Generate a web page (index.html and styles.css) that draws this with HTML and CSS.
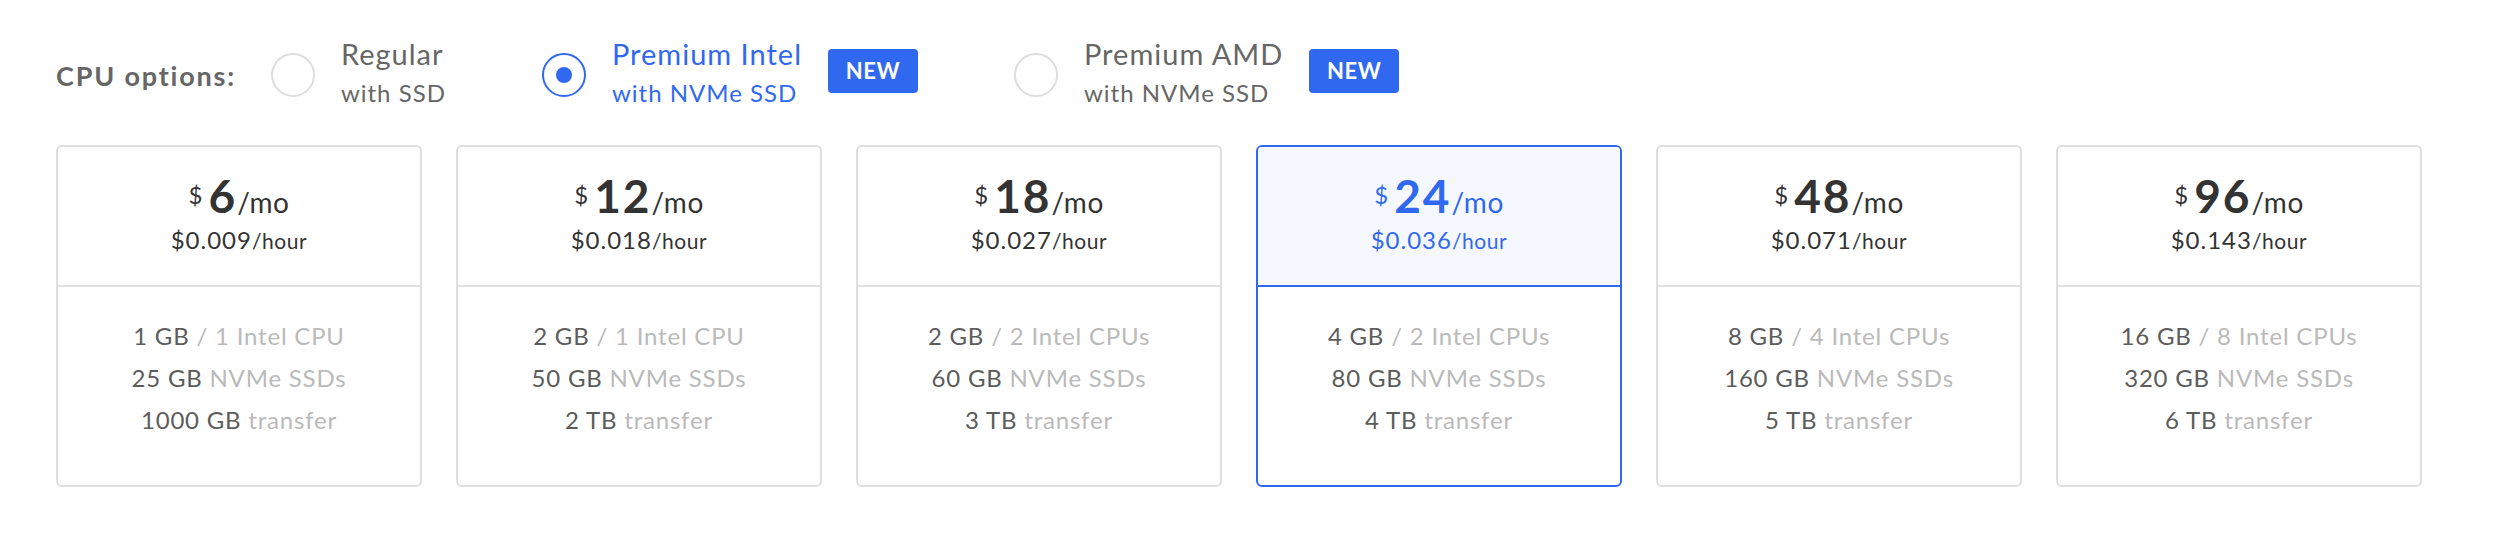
FILE: index.html
```html
<!DOCTYPE html>
<html lang="en">
<head>
<meta charset="utf-8">
<title>Droplet plans</title>
<link rel="stylesheet" href="styles.css">
</head>
<body>
<div class="page">
  <div class="cpu-row">
    <div class="cpu-label">CPU options:</div>
    <div class="option">
      <span class="radio"></span>
      <div class="opt-text">
        <div class="opt-title">Regular</div>
        <div class="opt-sub">with SSD</div>
      </div>
    </div>
    <div class="option selected">
      <span class="radio"><span class="dot"></span></span>
      <div class="opt-text">
        <div class="opt-title">Premium Intel</div>
        <div class="opt-sub">with NVMe SSD</div>
      </div>
      <span class="badge">NEW</span>
    </div>
    <div class="option">
      <span class="radio"></span>
      <div class="opt-text">
        <div class="opt-title">Premium AMD</div>
        <div class="opt-sub">with NVMe SSD</div>
      </div>
      <span class="badge">NEW</span>
    </div>
  </div>

  <div class="cards">
    <div class="card">
      <div class="card-head">
        <div class="price"><span class="cur">$</span>6<span class="per">/mo</span></div>
        <div class="hour">$0.009<span class="hour-unit">/hour</span></div>
      </div>
      <div class="card-body">
        <div class="spec">1 GB <span class="muted">/ 1 Intel CPU</span></div>
        <div class="spec">25 GB <span class="muted">NVMe SSDs</span></div>
        <div class="spec">1000 GB <span class="muted">transfer</span></div>
      </div>
    </div>
    <div class="card">
      <div class="card-head">
        <div class="price"><span class="cur">$</span>12<span class="per">/mo</span></div>
        <div class="hour">$0.018<span class="hour-unit">/hour</span></div>
      </div>
      <div class="card-body">
        <div class="spec">2 GB <span class="muted">/ 1 Intel CPU</span></div>
        <div class="spec">50 GB <span class="muted">NVMe SSDs</span></div>
        <div class="spec">2 TB <span class="muted">transfer</span></div>
      </div>
    </div>
    <div class="card">
      <div class="card-head">
        <div class="price"><span class="cur">$</span>18<span class="per">/mo</span></div>
        <div class="hour">$0.027<span class="hour-unit">/hour</span></div>
      </div>
      <div class="card-body">
        <div class="spec">2 GB <span class="muted">/ 2 Intel CPUs</span></div>
        <div class="spec">60 GB <span class="muted">NVMe SSDs</span></div>
        <div class="spec">3 TB <span class="muted">transfer</span></div>
      </div>
    </div>
    <div class="card selected">
      <div class="card-head">
        <div class="price"><span class="cur">$</span>24<span class="per">/mo</span></div>
        <div class="hour">$0.036<span class="hour-unit">/hour</span></div>
      </div>
      <div class="card-body">
        <div class="spec">4 GB <span class="muted">/ 2 Intel CPUs</span></div>
        <div class="spec">80 GB <span class="muted">NVMe SSDs</span></div>
        <div class="spec">4 TB <span class="muted">transfer</span></div>
      </div>
    </div>
    <div class="card">
      <div class="card-head">
        <div class="price"><span class="cur">$</span>48<span class="per">/mo</span></div>
        <div class="hour">$0.071<span class="hour-unit">/hour</span></div>
      </div>
      <div class="card-body">
        <div class="spec">8 GB <span class="muted">/ 4 Intel CPUs</span></div>
        <div class="spec">160 GB <span class="muted">NVMe SSDs</span></div>
        <div class="spec">5 TB <span class="muted">transfer</span></div>
      </div>
    </div>
    <div class="card">
      <div class="card-head">
        <div class="price"><span class="cur">$</span>96<span class="per">/mo</span></div>
        <div class="hour">$0.143<span class="hour-unit">/hour</span></div>
      </div>
      <div class="card-body">
        <div class="spec">16 GB <span class="muted">/ 8 Intel CPUs</span></div>
        <div class="spec">320 GB <span class="muted">NVMe SSDs</span></div>
        <div class="spec">6 TB <span class="muted">transfer</span></div>
      </div>
    </div>
  </div>
</div>
</body>
</html>
```

FILE: styles.css
```css
* { box-sizing: border-box; }

html, body {
  margin: 0;
  padding: 0;
  background: #ffffff;
}

body {
  font-family: "Lato", "Liberation Sans", sans-serif;
  color: #333333;
}

.page {
  padding: 36px 0 0 56px;
}

.cpu-row {
  display: flex;
  align-items: center;
}

.cpu-label {
  font-size: 27px;
  line-height: 30px;
  font-weight: 700;
  letter-spacing: 1.8px;
  color: #666666;
  margin-right: 35px;
  padding-top: 2px;
}

.option {
  display: flex;
  align-items: center;
  margin-right: 96px;
  color: #666666;
}

.option.selected {
  color: #3069f0;
}

.radio {
  width: 44px;
  height: 44px;
  border: 2px solid #dddddd;
  border-radius: 50%;
  display: flex;
  align-items: center;
  justify-content: center;
  margin-right: 26px;
  flex: none;
}

.option.selected .radio {
  border-color: #3069f0;
}

.dot {
  width: 16px;
  height: 16px;
  border-radius: 50%;
  background: #3069f0;
}

.opt-text {
  display: flex;
  flex-direction: column;
}

.opt-title {
  font-size: 29px;
  line-height: 36px;
  letter-spacing: 1px;
}

.opt-sub {
  font-size: 24px;
  line-height: 41px;
  letter-spacing: 1px;
}

.badge {
  margin-left: 26px;
  margin-bottom: 8px;
  width: 90px;
  height: 44px;
  border-radius: 4px;
  background: #3069f0;
  color: #ffffff;
  font-size: 22px;
  font-weight: 700;
  display: flex;
  align-items: center;
  justify-content: center;
  letter-spacing: 0.6px;
}

.cards {
  display: flex;
  gap: 34px;
  margin-top: 32px;
}

.card {
  width: 366px;
  height: 342px;
  border: 2px solid #dfdfdf;
  border-radius: 6px;
  display: flex;
  flex-direction: column;
  overflow: hidden;
  text-align: center;
}

.card-head {
  height: 140px;
  border-bottom: 2px solid #dfdfdf;
  padding-top: 24px;
  color: #333333;
}

.price {
  font-size: 46px;
  line-height: 50px;
  font-weight: 700;
  letter-spacing: 2px;
}

.cur {
  font-size: 24px;
  font-weight: 400;
  line-height: 1;
  vertical-align: 9px;
  margin-right: 6px;
  letter-spacing: 0;
}

.per {
  font-size: 28px;
  font-weight: 400;
  line-height: 1;
  letter-spacing: 0.5px;
}

.hour {
  font-size: 24px;
  line-height: 32px;
  margin-top: 3px;
  letter-spacing: 1px;
}

.hour-unit {
  font-size: 21px;
  line-height: 1;
  letter-spacing: 0.6px;
}

.card-body {
  padding-top: 28px;
}

.spec {
  font-size: 24px;
  line-height: 42px;
  letter-spacing: 0.8px;
  color: #5c5c5c;
}

.muted {
  color: #bababa;
}

.card.selected {
  border-color: #3069f0;
}

.card.selected .card-head {
  background: #f5f8fe;
  border-bottom-color: #3069f0;
  color: #3069f0;
}
```
